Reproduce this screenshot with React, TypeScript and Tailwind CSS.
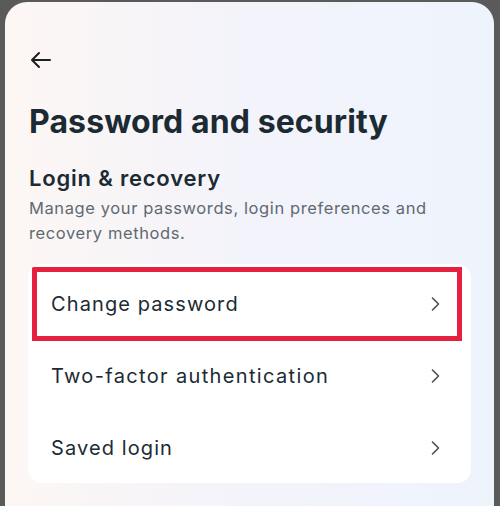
import React from "react";

const rows = ["Change password", "Two-factor authentication", "Saved login"];

function Chevron() {
  return (
    <svg width="12" height="16" viewBox="0 0 12 16" fill="none" className="shrink-0">
      <path d="M2.5 2l6 6-6 6" stroke="#4b4f56" strokeWidth="1.6" strokeLinecap="round" strokeLinejoin="round" />
    </svg>
  );
}

export default function App() {
  return (
    <div
      className="w-[500px] h-[506px] bg-[#5b5a5a] pt-[2px] pl-[5px] pr-[6px] overflow-hidden"
      style={{ fontFamily: "Inter, 'Noto Sans', sans-serif" }}
    >
      <div className="h-full rounded-t-[22px] bg-gradient-to-r from-[#fdf7f4] via-[#f3f3fb] to-[#eef4fc] pl-[23px] pr-[23px] pt-[44px]">
        {/* Back arrow */}
        <div className="h-[28px] flex items-center pl-[1px]">
          <svg width="24" height="24" viewBox="0 0 24 24" fill="none">
            <path d="M21 12H3M10 5l-7 7 7 7" stroke="#1c1e21" strokeWidth="2" strokeLinecap="round" strokeLinejoin="round" />
          </svg>
        </div>

        <h1 className="mt-[28px] pl-[1px] text-[32px] leading-[40px] font-bold text-[#1c2b33] tracking-[0.1px]">
          Password and security
        </h1>

        <h2 className="mt-[22px] pl-[1px] text-[22px] leading-[28px] font-semibold text-[#1c2b33] tracking-[0.8px]">
          Login &amp; recovery
        </h2>
        <p className="mt-[4px] pl-[1px] text-[16.5px] leading-[25px] text-[#5f6a72] tracking-[0.6px]">
          Manage your passwords, login preferences and recovery methods.
        </p>

        <div className="mt-[18px] bg-white rounded-[14px] overflow-hidden">
          <div className="h-[74px] ml-[4px] mr-[9px] mt-[3px] border-[5px] border-[#e5213f] flex items-center justify-between pl-[14px] pr-[15px]">
            <span className="text-[20px] text-[#1c2b33] tracking-[1.1px]">{rows[0]}</span>
            <Chevron />
          </div>
          <div className="h-[68px] pt-[1px] flex items-center justify-between pl-[23px] pr-[29px]">
            <span className="text-[20px] text-[#1c2b33] tracking-[1.35px]">{rows[1]}</span>
            <Chevron />
          </div>
          <div className="h-[74px] pt-[4px] flex items-center justify-between pl-[23px] pr-[29px]">
            <span className="text-[20px] text-[#1c2b33] tracking-[1.1px]">{rows[2]}</span>
            <Chevron />
          </div>
        </div>
      </div>
    </div>
  );
}
